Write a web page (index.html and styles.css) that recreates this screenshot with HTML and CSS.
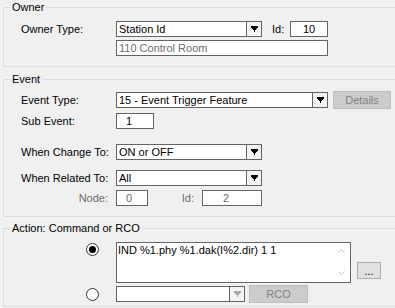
FILE: index.html
```html
<!doctype html>
<html>
<head>
<meta charset="utf-8">
<title>Event Trigger</title>
<link rel="stylesheet" href="styles.css">
</head>
<body>
<!--所有者-->
<fieldset class="group owner">
	<legend>Owner</legend>
	<div class="inner">
		<div class="row">
			<span class="label">Owner Type:</span>
			<div class="combo w146">
				<span class="value">Station Id</span>
				<span class="drop"><svg width="7" height="6" viewBox="0 0 7 6"><path d="M0 0h7v2h-1v1h-1v1h-1v2h-1v-2h-1v-1h-1v-1h-1z"/></svg></span>
			</div>
			<span class="idlabel">Id:</span>
			<div class="box w38 center">10</div>
		</div>
		<div class="row second">
			<div class="box w212 dim indent">110 Control Room</div>
		</div>
	</div>
</fieldset>

<!--事件-->
<fieldset class="group event">
	<legend>Event</legend>
	<div class="inner">
		<div class="row">
			<span class="label">Event Type:</span>
			<div class="combo w212">
				<span class="value">15 - Event Trigger Feature</span>
				<span class="drop"><svg width="7" height="6" viewBox="0 0 7 6"><path d="M0 0h7v2h-1v1h-1v1h-1v2h-1v-2h-1v-1h-1v-1h-1z"/></svg></span>
			</div>
			<button class="btn off details">Details</button>
		</div>
		<div class="row sub">
			<span class="label">Sub Event:</span>
			<div class="box w38 pad9">1</div>
		</div>
		<div class="row change">
			<span class="label">When Change To:</span>
			<div class="combo w146">
				<span class="value">ON or OFF</span>
				<span class="drop"><svg width="7" height="6" viewBox="0 0 7 6"><path d="M0 0h7v2h-1v1h-1v1h-1v2h-1v-2h-1v-1h-1v-1h-1z"/></svg></span>
			</div>
		</div>
		<div class="row related">
			<span class="label">When Related To:</span>
			<div class="combo w146">
				<span class="value">All</span>
				<span class="drop"><svg width="7" height="6" viewBox="0 0 7 6"><path d="M0 0h7v2h-1v1h-1v1h-1v2h-1v-2h-1v-1h-1v-1h-1z"/></svg></span>
			</div>
		</div>
		<div class="row node">
			<span class="label right dim">Node:</span>
			<div class="box w32 dim pad10">0</div>
			<span class="idlabel2 dim">Id:</span>
			<div class="box w60 dim pad21">2</div>
		</div>
	</div>
</fieldset>

<!--动作-->
<fieldset class="group action">
	<legend>Action: Command or RCO</legend>
	<div class="inner">
		<div class="row cmd">
			<span class="radiocell"><span class="radio checked"></span></span>
			<div class="memo">
				<div class="memotext">IND %1.phy %1.dak(I%2.dir) 1 1</div>
				<div class="scroll">
					<svg width="7" height="5" viewBox="0 0 7 5"><path d="M0.5 4.5L3.5 1.5L6.5 4.5" fill="none" stroke="#c2c2c2"/></svg>
					<svg width="7" height="5" viewBox="0 0 7 5"><path d="M0.5 0.5L3.5 3.5L6.5 0.5" fill="none" stroke="#c2c2c2"/></svg>
				</div>
			</div>
			<button class="btn more">...</button>
		</div>
		<div class="row rco">
			<span class="radiocell"><span class="radio"></span></span>
			<div class="combo w129 disabled">
				<span class="value"></span>
				<span class="drop"><svg width="7" height="6" viewBox="0 0 7 6"><path d="M0 0h7v2h-1v1h-1v1h-1v2h-1v-2h-1v-1h-1v-1h-1z"/></svg></span>
			</div>
			<button class="btn off rcobtn">RCO</button>
		</div>
	</div>
</fieldset>
</body>
</html>
```

FILE: styles.css
```css
html, body
{
	margin: 0;
	padding: 0;
	overflow: hidden;
}
body
{
	width: 395px;
	height: 308px;
	background: #f0f0f0;
	font-family: "Liberation Sans", Arial, sans-serif;
	font-size: 11px;
	color: #000;
}

/*分组框，右边框在窗口外*/
.group
{
	box-sizing: border-box;
	width: 392px;
	min-width: 0;
	margin: 0 0 0 3px;
	padding: 0;
	border: 1px solid #dcdcdc;
	border-right: none;
}
.group legend
{
	margin-left: 6px;
	padding: 0 2px;
	height: 13px;
	line-height: 13px;
}
.owner { margin-top: 1px; }
.event { margin-top: 6px; }
.action { margin-top: 5px; }

.owner .inner { padding: 7px 0 10px 17px; }
.event .inner { padding: 6px 0 10px 17px; }
.action .inner { padding: 7px 0 4px 17px; }

/*行*/
.row
{
	display: flex;
	align-items: center;
	height: 16px;
	line-height: 16px;
}
.row.second { margin-top: 3px; }
.row.sub { margin-top: 5px; }
.row.change { margin-top: 15px; }
.row.related { margin-top: 10px; }
.row.node { margin-top: 4px; }
.row.cmd
{
	height: 41px;
	align-items: flex-start;
}
.row.rco { margin-top: 3px; }

.label
{
	width: 95px;
	flex: none;
	white-space: nowrap;
}
.label.right
{
	box-sizing: border-box;
	text-align: right;
	padding-right: 8px;
}
.dim { color: #6d6d6d; }
.indent { margin-left: 95px; }

.idlabel
{
	margin-left: 10px;
	width: 18px;
}
.idlabel2
{
	box-sizing: border-box;
	width: 54px;
	text-align: right;
	padding-right: 8px;
}

/*文本框*/
.box
{
	box-sizing: border-box;
	height: 16px;
	line-height: 14px;
	border: 1px solid #646464;
	background: #fff;
	padding-left: 2px;
	white-space: nowrap;
	overflow: hidden;
}
.box.center { text-align: center; padding-left: 0; }
.box.pad9 { padding-left: 9px; }
.box.pad10 { padding-left: 9px; }
.box.pad21 { padding-left: 20px; }
.w32 { width: 32px; }
.w38 { width: 38px; }
.w60 { width: 60px; }
.w129 { width: 129px; }
.w146 { width: 146px; }
.w212 { width: 212px; }

/*下拉框*/
.combo
{
	box-sizing: border-box;
	display: flex;
	height: 16px;
	line-height: 14px;
	border: 1px solid #646464;
	background: #fff;
	flex: none;
}
.combo .value
{
	flex: 1;
	padding-left: 2px;
	white-space: nowrap;
	overflow: hidden;
}
.combo .drop
{
	width: 14px;
	border-left: 1px solid #646464;
	background: #f4f4f4;
	display: flex;
	align-items: center;
	justify-content: center;
}
.combo .drop svg { fill: #000; display: block; }
.combo.disabled .drop svg { fill: #a8a8a8; }

/*按钮*/
.btn
{
	box-sizing: border-box;
	font-family: inherit;
	font-size: 11px;
	padding: 0;
	margin: 0;
	border: 1px solid #adadad;
	background: #e1e1e1;
	color: #000;
	line-height: 14px;
}
.btn.off
{
	background: #cccccc;
	border-color: #bfbfbf;
	color: #838383;
}
.details
{
	width: 58px;
	height: 18px;
	margin-left: 5px;
}
.rcobtn
{
	width: 59px;
	height: 18px;
	margin-left: 4px;
}
.more
{
	width: 24px;
	height: 17px;
	margin-left: 6px;
	align-self: flex-end;
	margin-bottom: 4px;
	line-height: 12px;
}

/*单选按钮*/
.radiocell
{
	width: 95px;
	flex: none;
	box-sizing: border-box;
	padding-left: 65px;
	display: flex;
	align-items: center;
}
.cmd .radiocell { padding-top: 1px; }
.radio
{
	box-sizing: border-box;
	width: 13px;
	height: 13px;
	border: 1px solid #333;
	border-radius: 50%;
	background: #fff;
	display: flex;
	align-items: center;
	justify-content: center;
}
.radio.checked::after
{
	content: "";
	width: 7px;
	height: 7px;
	border-radius: 50%;
	background: #000;
}

/*命令输入区*/
.memo
{
	box-sizing: border-box;
	width: 235px;
	height: 41px;
	border: 1px solid #646464;
	background: #fff;
	display: flex;
	flex: none;
}
.memotext
{
	flex: 1;
	padding: 1px 0 0 1px;
	line-height: 13px;
	white-space: nowrap;
	overflow: hidden;
}
.scroll
{
	width: 12px;
	display: flex;
	flex-direction: column;
	justify-content: space-between;
	align-items: flex-start;
	padding: 5px 0 6px 0;
}
.scroll svg { display: block; }
```
